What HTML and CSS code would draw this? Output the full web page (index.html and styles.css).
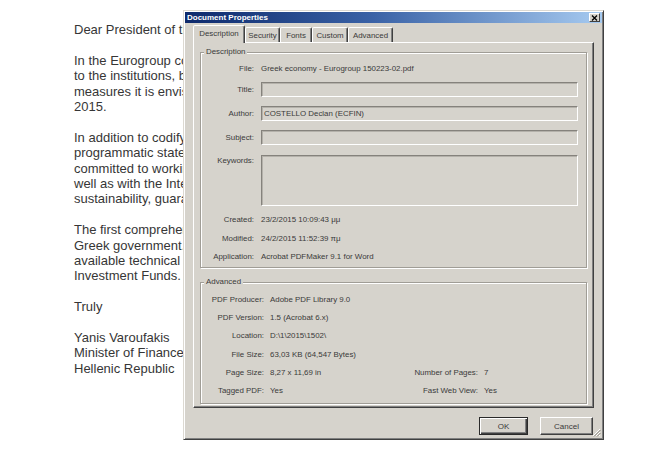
FILE: index.html
```html
<!DOCTYPE html>
<html>
<head>
<meta charset="utf-8">
<title>Document Properties</title>
<link rel="stylesheet" href="styles.css">
</head>
<body>
<div class="letter">
  <p>Dear President of the Eurogroup,</p>
  <p>In the Eurogroup communiqué of 20th February 2015 the Greek government<br>to the institutions, by Monday 23rd February 2015, a first comprehensive list<br>measures it is envisaging, based on the current arrangement, by the end of April<br>2015.</p>
  <p>In addition to codifying its reform agenda, in accordance with PM Tsipras'<br>programmatic statement to Parliament, the Greek government also commits to<br>committed to working in close agreement with European partners and institutions<br>well as with the International Monetary Fund, and take actions that strengthen<br>sustainability, guarantee financial stability and promote economic recovery.</p>
  <p>The first comprehensive list of reform measures is outlined below, as envisaged<br>Greek government. It is our intention to implement them while drawing upon<br>available technical assistance and financing from the European Structural and<br>Investment Funds.</p>
  <p>Truly</p>
  <p>Yanis Varoufakis<br>Minister of Finance<br>Hellenic Republic</p>
</div>

<div class="dialog">
  <div class="titlebar">
    <span class="title">Document Properties</span>
    <span class="close"><svg width="7" height="6" viewBox="0 0 7 6"><path d="M1 0.5L6 5.5M6 0.5L1 5.5" stroke="#000" stroke-width="1.3"/></svg></span>
  </div>
  <div class="content">
    <div class="tabs">
      <div class="tab active t-desc">Description</div>
      <div class="tab t-sec">Security</div>
      <div class="tab t-fonts">Fonts</div>
      <div class="tab t-custom">Custom</div>
      <div class="tab t-adv">Advanced</div>
    </div>
    <div class="panel">
      <div class="group">
        <div class="legend">Description</div>
        <div class="row r-file"><span class="lbl">File:</span><span class="val">Greek economy - Eurogroup 150223-02.pdf</span></div>
        <div class="row box r-title"><span class="lbl">Title:</span><span class="tb"></span></div>
        <div class="row box r-gap9"><span class="lbl">Author:</span><span class="tb">COSTELLO Declan (ECFIN)</span></div>
        <div class="row box r-gap9"><span class="lbl">Subject:</span><span class="tb"></span></div>
        <div class="row kw"><span class="lbl">Keywords:</span><span class="tb"></span></div>
        <div class="row r-created"><span class="lbl">Created:</span><span class="val">23/2/2015 10:09:43 μμ</span></div>
        <div class="row r-mod"><span class="lbl">Modified:</span><span class="val">24/2/2015 11:52:39 πμ</span></div>
        <div class="row r-app"><span class="lbl">Application:</span><span class="val">Acrobat PDFMaker 9.1 for Word</span></div>
      </div>
      <div class="group adv-group">
        <div class="legend">Advanced</div>
        <div class="adv">
          <span class="al">PDF Producer:</span><span>Adobe PDF Library 9.0</span>
          <span class="al">PDF Version:</span><span>1.5 (Acrobat 6.x)</span>
          <span class="al">Location:</span><span>D:\1\2015\1502\</span>
          <span class="al">File Size:</span><span>63,03 KB (64,547 Bytes)</span>
          <span class="al">Page Size:</span><span>8,27 x 11,69 in</span>
          <span class="ar">Number of Pages:</span><span>7</span>
          <span class="al">Tagged PDF:</span><span>Yes</span>
          <span class="ar">Fast Web View:</span><span>Yes</span>
        </div>
      </div>
    </div>
    <div class="footer">
      <div class="btn default">OK</div>
      <div class="btn cancel">Cancel</div>
    </div>
  </div>
  <svg class="grip" width="10" height="10" viewBox="0 0 10 10">
    <path d="M9 2L2 9M9 5L5 9M9 8L8 9" stroke="#fff" stroke-width="1"/>
    <path d="M9.5 3L3 9.5M9.5 6L6 9.5" stroke="#8a877f" stroke-width="1"/>
  </svg>
</div>
</body>
</html>
```

FILE: styles.css
```css
* { box-sizing: border-box; }

html, body {
  margin: 0;
  padding: 0;
  background: #fff;
  overflow: hidden;
}

body {
  width: 650px;
  height: 454px;
  position: relative;
  font-family: "Liberation Sans", Arial, sans-serif;
}

/* letter behind the dialog, clipped where the window covers it */
.letter {
  width: 183px;
  overflow: hidden;
  padding: 22px 0 0 74px;
  font-size: 13px;
  line-height: 15.4px;
  color: #363636;
  white-space: nowrap;
}

.letter p { margin: 0 0 15.4px; }

/* dialog window */
.dialog {
  position: absolute;
  left: 183px;
  top: 10px;
  width: 421px;
  height: 430px;
  background: #d6d3cc;
  border: 1px solid;
  border-color: #dcd9d2 #404040 #404040 #dcd9d2;
  box-shadow: inset 1px 1px 0 #fff, inset -1px -1px 0 #808080;
  padding: 1px;
  font-size: 7.9px;
  color: #3a3a3a;
  display: flex;
  flex-direction: column;
}

.titlebar {
  height: 11px;
  flex: none;
  background: linear-gradient(90deg, #0e2a6c 0%, #3a62a6 45%, #a6caf0 100%);
  display: flex;
  align-items: center;
  justify-content: space-between;
  padding: 0 2px;
}

.title {
  color: #fff;
  font-weight: bold;
  font-size: 8px;
  line-height: 11px;
}

.close {
  width: 11px;
  height: 9px;
  background: #d6d3cc;
  border: 1px solid;
  border-color: #fff #404040 #404040 #fff;
  display: flex;
  align-items: center;
  justify-content: center;
}

.content {
  flex: 1;
  display: flex;
  flex-direction: column;
  padding: 0 8px;
}

/* tabs */
.tabs {
  height: 19px;
  flex: none;
  display: flex;
  align-items: flex-end;
  position: relative;
  z-index: 1;
}

.tab {
  height: 15px;
  display: flex;
  align-items: center;
  justify-content: center;
  border: 1px solid;
  border-bottom: none;
  border-color: #fff #404040 transparent #fff;
  box-shadow: inset -1px 0 0 #808080;
  border-radius: 2px 2px 0 0;
  background: #d6d3cc;
}

.tab.active {
  height: 18px;
  margin-bottom: -1px;
  padding-bottom: 2px;
}

.t-desc { width: 52px; }
.t-sec { width: 35px; }
.t-fonts { width: 32px; }
.t-custom { width: 36px; }
.t-adv { width: 45px; }

/* tab page */
.panel {
  height: 366px;
  flex: none;
  border: 1px solid;
  border-color: #fff #404040 #404040 #fff;
  box-shadow: inset -1px -1px 0 #808080;
  padding: 9px 6px 0 6px;
}

.group {
  border: 1px solid #a09d96;
  box-shadow: inset 1px 1px 0 #fff, 1px 1px 0 #fff;
  padding-bottom: 4px;
}

.legend {
  width: fit-content;
  height: 10px;
  line-height: 10px;
  margin: -6px 0 0 3px;
  padding: 0 2px;
  background: #d6d3cc;
}

.row {
  display: flex;
  align-items: center;
  height: 14px;
  padding-right: 8px;
}

.row.box { height: 15px; }

.row.kw {
  height: 51px;
  margin-top: 10px;
  align-items: stretch;
}

.row.kw .lbl { padding-top: 1px; line-height: 10px; }

.r-file { margin-top: 4px; }
.r-title { margin-top: 7px; }
.r-gap9 { margin-top: 9px; }
.r-created { margin-top: 6px; }
.r-mod { margin-top: 5px; }
.r-app { margin-top: 4px; }

.lbl {
  width: 53px;
  flex: none;
  text-align: right;
  margin-right: 7px;
}

.tb {
  flex: 1;
  height: 100%;
  border: 1px solid;
  border-color: #85827c #fff #fff #85827c;
  box-shadow: inset 1px 1px 0 #b4b1aa;
  padding-left: 2px;
  display: flex;
  align-items: center;
}

.row.kw .tb { align-items: flex-start; }

.adv-group {
  margin-top: 14px;
  padding-bottom: 3px;
}

.adv {
  display: grid;
  grid-template-columns: 63px 125px 77px 1fr;
  column-gap: 6px;
  grid-auto-rows: 18.3px;
  align-items: center;
  margin-top: 3px;
}

.al { grid-column: 1; text-align: right; }
.ar { grid-column: 3; text-align: right; }

/* buttons */
.footer {
  display: flex;
  justify-content: flex-end;
  gap: 12px;
  padding: 9px 1px 0 0;
}

.btn {
  height: 18px;
  display: flex;
  align-items: center;
  justify-content: center;
  font-size: 8px;
  border: 1px solid;
  border-color: #fff #404040 #404040 #fff;
  box-shadow: inset -1px -1px 0 #808080;
}

.btn.default {
  width: 49px;
  border-color: #2a2a2a;
  box-shadow: inset 1px 1px 0 #fff, inset -1px -1px 0 #404040, inset -2px -2px 0 #808080;
}

.btn.cancel { width: 53px; }

.grip {
  position: absolute;
  right: 2px;
  bottom: 2px;
}
```
